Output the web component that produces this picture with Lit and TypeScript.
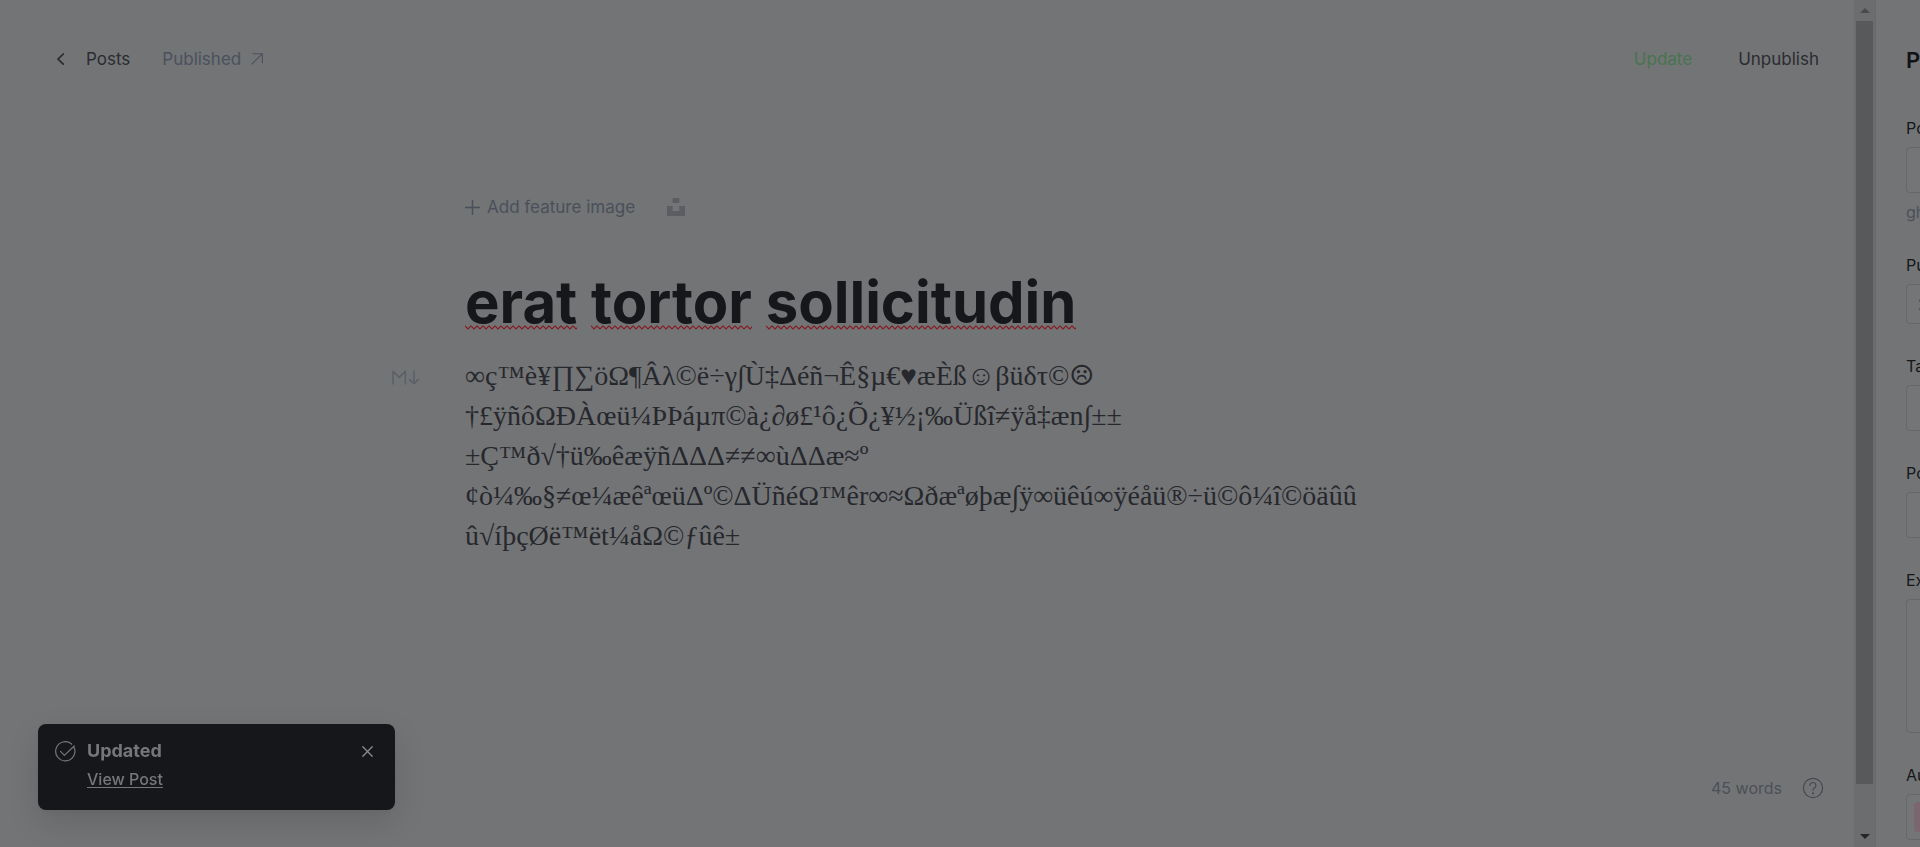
import { LitElement, html, css, svg, nothing } from "lit";
import { customElement } from "lit/decorators.js";

const bodyLines = [
  "∞ç™è¥∏∑öΩ¶Âλ©ë÷γ∫Ù‡Δéñ¬Ê§µ€♥æÈß☺βüδτ©☹",
  "†£ÿñôΩÐÀœü¼ÞÞáµπ©à¿∂ø£¹ô¿Õ¿¥½¡‰Üßî≠ÿå‡æn∫±±",
  "±Ç™ð√†ü‰êæÿñΔΔΔ≠≠∞ùΔΔæ≈º",
  "¢ò¼‰§≠œ¼æêªœüΔº©ΔÜñéΩ™êr∞≈Ωðæªøþæ∫ÿ∞üêú∞ÿéåü®÷ü©ô¼î©öäûû",
  "û√íþçØë™ët¼åΩ©ƒûê±",
];

const titleWords = ["erat", "tortor", "sollicitudin"];

@customElement("editor-header")
export class EditorHeader extends LitElement {
  static styles = css`
    :host { display: block; }
    .bar { display: flex; align-items: center; justify-content: space-between; padding: 44px 35px 0 56px; font-size: 17px; line-height: 30px; }
    .left, .right { display: flex; align-items: center; }
    .left { gap: 32px; }
    .right { gap: 46px; }
    a { text-decoration: none; display: flex; align-items: center; }
    .back { color: #2a2c31; gap: 20px; }
    .live { color: #4a515d; gap: 10px; }
    button { font: inherit; padding: 0; border: 0; background: none; cursor: pointer; color: #2a2c31; }
    .update { color: #47744f; }
  `;
  render() {
    return html`<header class="bar">
      <nav class="left">
        <a class="back" href="#posts">
          <svg width="10" height="12" viewBox="0 0 10 12" fill="none" stroke="currentColor" stroke-width="1.7" stroke-linecap="round" stroke-linejoin="round"><path d="M7.3 1 2 6.2l5.3 5" /></svg>
          Posts
        </a>
        <a class="live" href="#published">
          Published
          <svg width="12" height="12" viewBox="0 0 12 12" fill="none" stroke="currentColor" stroke-width="1.1"><path d="M.6 11.4 11.2.8M1.6.7h9.8v9.6" /></svg>
        </a>
      </nav>
      <div class="right">
        <button class="update">Update</button>
        <button>Unpublish</button>
      </div>
    </header>`;
  }
}

@customElement("post-canvas")
export class PostCanvas extends LitElement {
  static styles = css`
    :host { display: block; flex: 1; }
    .canvas { max-width: 924px; margin: 0 auto; padding-top: 118px; }
    .media { display: flex; align-items: center; gap: 32px; }
    button { display: flex; align-items: center; gap: 7px; padding: 0; border: 0; background: none; font: 17px/30px Inter, sans-serif; color: #4a505a; cursor: pointer; }
    h1 { margin: 40px 0 0; font-size: 58px; line-height: 80px; font-weight: 700; color: #15171a; }
    .word { background: url("data:image/svg+xml,%3Csvg xmlns='http://www.w3.org/2000/svg' width='6' height='5'%3E%3Cpath d='M-1 0 0 1 3 4 6 1 7 0' fill='none' stroke='%23861c22' stroke-width='1.2'/%3E%3C/svg%3E") 0 58px repeat-x; }
    .card { position: relative; margin-top: 14px; }
    .mark { position: absolute; right: 100%; top: 14px; margin-right: 46px; color: #5a5f68; }
    p { margin: 0; font-family: Georgia, "Liberation Serif", "DejaVu Serif", serif; font-size: 28px; line-height: 40px; color: #26282d; white-space: nowrap; }
  `;
  render() {
    return html`<main class="canvas">
      <div class="media">
        <button>
          <svg width="15" height="15" viewBox="0 0 15 15" fill="none" stroke="currentColor" stroke-width="1.5"><path d="M7.5 0v15M0 7.5h15" /></svg>
          Add feature image
        </button>
        <button aria-label="Unsplash">
          <svg width="18" height="18" viewBox="0 0 18 18" fill="#5b5d63"><path d="M5.6 0h6.6v5.1H5.6zM0 8h5.6v5h6.6V8H18v10H0z" /></svg>
        </button>
      </div>
      <h1>${titleWords.map((w, i) => html`${i ? " " : nothing}<span class="word">${w}</span>`)}</h1>
      <div class="card">
        <svg class="mark" width="27" height="15" viewBox="0 0 27 15" fill="none" stroke="currentColor" stroke-width="1.5" stroke-linecap="round" stroke-linejoin="round"><path d="M1 14V1.2l6.2 6.2 6.2-6.2V14M22 1v12.6M17.6 9.6l4.4 4.2 4.2-4.2" /></svg>
        <p>${bodyLines.map((l, i) => html`${i ? html`<br />` : nothing}${l}`)}</p>
      </div>
    </main>`;
  }
}

@customElement("editor-footer")
export class EditorFooter extends LitElement {
  static styles = css`
    :host { display: block; }
    footer { display: flex; justify-content: flex-end; align-items: center; gap: 20px; padding: 0 30px 44px 0; font-size: 16px; line-height: 30px; color: #4b5058; }
    a { display: flex; color: #45484f; }
  `;
  render() {
    return html`<footer>
      <span>45 words</span>
      <a href="#help" aria-label="Help">
        <svg width="22" height="22" viewBox="0 0 22 22" fill="none" stroke="currentColor" stroke-width="1.1" stroke-linecap="round"><circle cx="11" cy="11" r="9.6" /><path d="M7.9 8.4a3 3 0 1 1 4.4 2.7c-.9.4-1.3 1-1.3 1.8v.6" /><circle cx="11" cy="16.2" r=".5" fill="currentColor" /></svg>
      </a>
    </footer>`;
  }
}

@customElement("scroll-rail")
export class ScrollRail extends LitElement {
  static styles = css`
    :host { display: flex; flex-direction: column; flex: 0 0 22px; box-sizing: border-box; background: #6c6d6f; border-right: 1px solid #68696b; }
    .end { flex: 0 0 21px; display: flex; justify-content: center; align-items: center; color: #4a4b4d; }
    .end.down { color: #242527; }
    .track { flex: 1; padding: 0 2px; }
    .thumb { background: #58595b; }
  `;
  render() {
    const visible = 94.8;
    const arrow = (d: string) => html`<svg width="10" height="5" viewBox="0 0 10 5" fill="currentColor">${svg`<path d=${d} />`}</svg>`;
    return html`
      <div class="end">${arrow("M5 0 10 5H0z")}</div>
      <div class="track"><div class="thumb" style="height:${visible}%"></div></div>
      <div class="end down">${arrow("M0 0h10L5 5z")}</div>
    `;
  }
}

@customElement("post-settings")
export class PostSettings extends LitElement {
  static styles = css`
    :host { display: block; flex: 0 0 438px; margin-right: -394px; }
    form { padding: 44px 30px 0; }
    h2 { margin: 0 0 41px; font-size: 22px; line-height: 32px; font-weight: 600; color: #111316; }
    .fields { display: flex; flex-direction: column; gap: 31px; }
    .field { display: flex; flex-direction: column; gap: 8px; font-size: 16px; line-height: 22px; color: #15171a; }
    input, textarea, select, .tokens { box-sizing: border-box; width: 100%; height: 46px; margin: 0; padding: 0 11px; border: 1px solid #666769; border-radius: 4px; background: #747577; font: inherit; color: #3a3c40; resize: none; appearance: none; outline: 0; }
    .date { height: 40px; }
    .excerpt { height: 134px; }
    .tokens { display: flex; align-items: center; padding: 0 7px; }
    .token { padding: 4px 10px; border-radius: 4px; background: #7b656e; line-height: 22px; }
    .help { color: #4b5058; }
  `;
  render() {
    return html`<form>
      <h2>Post settings</h2>
      <div class="fields">
        <div class="field"><label for="url">Post URL</label><input id="url" />
          <span class="help">ghost.io/</span></div>
        <div class="field"><label for="date">Publish date</label><input class="date" id="date" value="2021" /></div>
        <div class="field"><label for="tags">Tags</label><input id="tags" /></div>
        <div class="field"><label for="access">Post access</label><select id="access"></select></div>
        <div class="field"><label for="excerpt">Excerpt</label><textarea class="excerpt" id="excerpt"></textarea></div>
        <div class="field"><span>Authors</span><div class="tokens"><span class="token">Ghost</span></div></div>
      </div>
    </form>`;
  }
}

@customElement("update-toast")
export class UpdateToast extends LitElement {
  static styles = css`
    :host { position: fixed; left: 38px; bottom: 37px; z-index: 2; }
    .toast { display: flex; align-items: flex-start; gap: 11px; box-sizing: border-box; width: 357px; padding: 13px 21px 17px 17px; border-radius: 8px; background: #16171b; color: #76777a; box-shadow: 0 12px 32px rgba(0, 0, 0, 0.12), 0 2px 6px rgba(0, 0, 0, 0.04); }
    .icon { margin-top: 4px; flex: none; }
    .text { flex: 1; display: flex; flex-direction: column; align-items: flex-start; }
    .title { font-size: 18px; line-height: 28px; font-weight: 700; }
    a { font-size: 16px; line-height: 28px; color: inherit; font-weight: 500; text-underline-offset: 2px; }
    button { display: flex; padding: 9px 1px; border: 0; background: none; color: #8a8b8d; cursor: pointer; }
  `;
  render() {
    return html`<div class="toast" role="status">
      <svg class="icon" width="21" height="21" viewBox="0 0 21 21" fill="none" stroke="currentColor" stroke-width="1.2" stroke-linecap="round" stroke-linejoin="round"><path d="M19 6.2A9.6 9.6 0 1 1 16.6 3" /><path d="m5.6 10.4 3.8 4L19.2 5" /></svg>
      <div class="text"><span class="title">Updated</span><a href="#view">View Post</a></div>
      <button aria-label="Close"><svg width="11" height="11" viewBox="0 0 11 11" fill="none" stroke="currentColor" stroke-width="1.3" stroke-linecap="round"><path d="m.8.8 9.4 9.4M10.2.8.8 10.2" /></svg></button>
    </div>`;
  }
}

@customElement("app-root")
export class AppRoot extends LitElement {
  static styles = css`
    :host { display: flex; height: 100vh; overflow: hidden; background: #737476; font-family: Inter, sans-serif; color: #2a2c31; }
    .editor { flex: 1; min-width: 0; display: flex; flex-direction: column; }
  `;
  render() {
    return html`
      <div class="editor">
        <editor-header></editor-header>
        <post-canvas></post-canvas>
        <editor-footer></editor-footer>
      </div>
      <scroll-rail></scroll-rail>
      <post-settings></post-settings>
      <update-toast></update-toast>
    `;
  }
}
